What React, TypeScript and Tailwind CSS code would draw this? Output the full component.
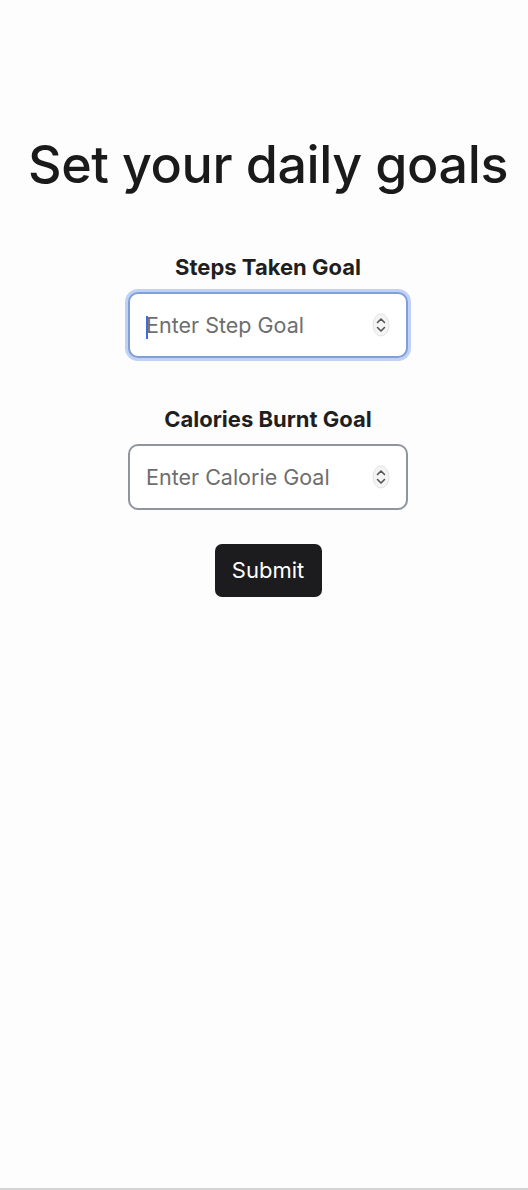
import React from 'react';

const Spinner: React.FC = () => (
  <svg width="18" height="24" viewBox="0 0 18 24" className="shrink-0">
    <ellipse cx="9" cy="12" rx="8" ry="11" fill="#f4f4f4" stroke="#e2e2e2" strokeWidth="1" />
    <path d="M5.5 9.5 L9 6 L12.5 9.5" fill="none" stroke="#555" strokeWidth="1.6" strokeLinecap="round" strokeLinejoin="round" />
    <path d="M5.5 14.5 L9 18 L12.5 14.5" fill="none" stroke="#555" strokeWidth="1.6" strokeLinecap="round" strokeLinejoin="round" />
  </svg>
);

interface GoalFieldProps {
  label: string;
  placeholder: string;
  focused?: boolean;
}

const GoalField: React.FC<GoalFieldProps> = ({ label, placeholder, focused }) => (
  <div className="flex flex-col items-center">
    <label className="text-[22px] leading-[26px] font-bold text-[#1f1f1f] mb-[12px]">{label}</label>
    <div
      className={
        focused
          ? 'relative w-[280px] h-[66px] rounded-[10px] border-2 border-[#7f9fd6] shadow-[0_0_0_3px_rgba(140,175,240,0.55)] bg-white flex items-center pl-[16px] pr-[16px]'
          : 'relative w-[280px] h-[66px] rounded-[10px] border-2 border-[#8f959c] bg-white flex items-center pl-[16px] pr-[16px]'
      }
    >
      {focused && <span className="absolute left-[16px] top-[22px] w-[2px] h-[23px] bg-[#3b6fd8]" />}
      <input
        type="text"
        placeholder={placeholder}
        className="flex-1 min-w-0 bg-transparent outline-none text-[21.5px] text-[#222] placeholder:text-[#6e6e6e]"
      />
      <Spinner />
    </div>
  </div>
);

export default function App() {
  return (
    <div
      className="min-h-[1190px] bg-[#fdfdfd] flex flex-col items-center pt-[132px] pl-[8px] border-b-2 border-[#d4d4d4]"
      style={{ fontFamily: 'Inter, "Noto Sans", sans-serif' }}
    >
      <h1 className="text-[52px] leading-[66px] font-medium text-[#1a1a1a] tracking-[-0.4px] mb-[56px]">
        Set your daily goals
      </h1>
      <div className="flex flex-col items-center gap-[48px]">
        <GoalField label="Steps Taken Goal" placeholder="Enter Step Goal" focused />
        <GoalField label="Calories Burnt Goal" placeholder="Enter Calorie Goal" />
      </div>
      <button className="mt-[34px] w-[107px] h-[53px] rounded-[7px] bg-[#1c1c1e] text-white text-[22px]">
        Submit
      </button>
    </div>
  );
}
